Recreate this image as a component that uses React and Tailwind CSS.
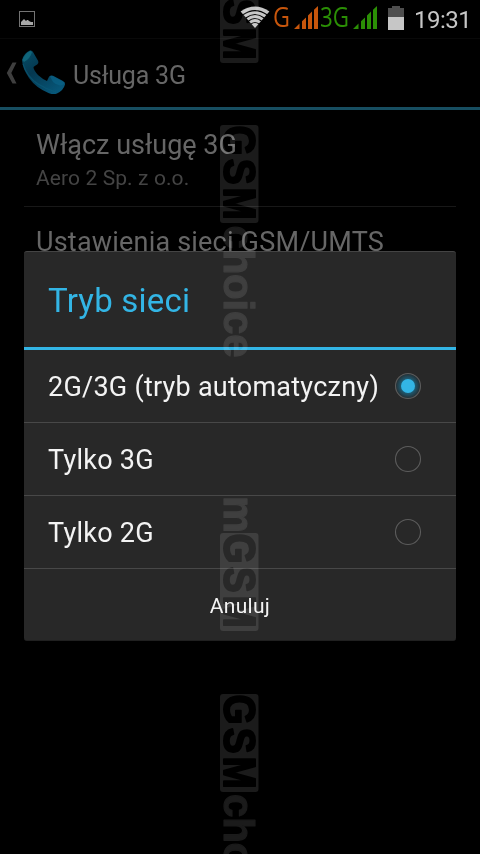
import React, { useState } from "react";
import clsx from "clsx";

const networkModes = [
  { id: "auto", label: "2G/3G (tryb automatyczny)" },
  { id: "3g", label: "Tylko 3G" },
  { id: "2g", label: "Tylko 2G" },
];

// y = top edge of each visible piece
const platePositions = [-35, 125, 533, 694];

function PictureIcon() {
  return (
    <svg width="16" height="16" viewBox="0 0 16 16">
      <rect x="0.5" y="0.5" width="15" height="15" fill="#000" stroke="#737373" />
      <path d="M2 14v-3l2-2 1-1 2 2 1-1h1l1 1 2 1h2v3z" fill="#a8a8a8" />
    </svg>
  );
}

function WifiIcon() {
  return (
    <svg width="30" height="22" viewBox="0 0 30 22">
      <path d="M0.6 5.5Q15 -4.6 29.4 5.5L15 22z" fill="#c6c6c6" />
      <g fill="none" stroke="#000" strokeWidth="1.1">
        <path d="M3 8.8Q15 0.4 27 8.8" />
        <path d="M5.8 12Q15 5 24.2 12" />
        <path d="M8.5 15Q15 10 21.5 15" />
        <path d="M11 18Q15 15 19 18" />
      </g>
    </svg>
  );
}

function SignalIcon({ color }) {
  return (
    <svg width="24" height="23" viewBox="0 0 24 23" fill={color}>
      <path d="M0 23L5.5 17.5V23zM8 15.3L12 11.5V23H8zM14 9.6L18 5.6V23H14zM20 3.7L24 0V23H20z" />
    </svg>
  );
}

function NetworkType({ label, width, color }) {
  return (
    <svg className="overflow-visible" width={width} height="36" fill={color}>
      <text x="0" y="27" fontFamily="Open Sans" fontSize="26.5" textLength={width} lengthAdjust="spacingAndGlyphs">
        {label}
      </text>
    </svg>
  );
}

function BatteryIcon() {
  return (
    <svg width="16" height="24" viewBox="0 0 16 24">
      <path d="M0 2h4V0h8v2h4v9H0z" fill="#4e4e4e" />
      <path d="M0 11h16v13H0z" fill="#c6c6c6" />
    </svg>
  );
}

function PhoneIcon() {
  return (
    <svg width="45" height="45" viewBox="0 0 45 45">
      <defs>
        <linearGradient id="phoneBody" x1="0" y1="0" x2="0.7" y2="1">
          <stop offset="0" stopColor="#064f69" />
          <stop offset="0.45" stopColor="#053850" />
          <stop offset="1" stopColor="#075678" />
        </linearGradient>
      </defs>
      <path
        d="M1 10Q3 3 9 0.5Q11 0 12 2L17.2 11Q18 13 16.2 14.5Q14 15.8 12.5 17Q12.5 20 17 25Q22 29.5 26 31L28 26.8Q29.5 24.8 32 25.8L42 31Q44.6 32.5 44 34.6Q42.5 40.5 36 43.6Q32.5 44.8 28 43.2Q15 38 8 28Q1.5 18.5 1 10z"
        fill="url(#phoneBody)"
      />
      <path d="M1.5 10Q4 3 9.5 0.8L11 2.2Q9 9 3 12z" fill="#10657a" />
      <path d="M29 26.5Q30.5 25 33 26.5L43.5 32.5Q43 35 39 35.5Q35 35 32 32z" fill="#0a6388" opacity="0.7" />
      <path d="M2 14Q6 27 17 34Q25 39 35 42" fill="none" stroke="#0b5b78" strokeWidth="1.2" opacity="0.6" />
    </svg>
  );
}

function Radio({ checked }) {
  return (
    <svg width="28" height="28" viewBox="0 0 28 28">
      <defs>
        <radialGradient id="radioGlow">
          <stop offset="0.55" stopColor="#1e5c74" />
          <stop offset="0.95" stopColor="#253238" />
        </radialGradient>
      </defs>
      <circle cx="14" cy="14" r="12.5" fill={checked ? "url(#radioGlow)" : "none"} stroke="#5c5c5c" strokeWidth="1.1" />
      {checked && <circle cx="14" cy="14" r="7" fill="#33b5e5" />}
    </svg>
  );
}

function Watermark() {
  return (
    <svg className="pointer-events-none absolute inset-0 mix-blend-screen" width="480" height="854">
      <g fontFamily="Liberation Sans" fontWeight="700" strokeLinejoin="round" strokeWidth="2">
        {platePositions.map((y) => (
          <g key={y} transform={`translate(220 ${y}) rotate(90)`}>
            <rect x="0" y="-38.5" width="98" height="38.5" rx="3" fill="#1b1b1b" />
            <text transform="translate(0.5 -4) scale(0.86 1)" fontSize="45" letterSpacing="3.6" fill="#000" stroke="#000">
              GSM
            </text>
          </g>
        ))}
        <g fill="#1b1b1b" stroke="#1b1b1b" strokeWidth="1.2" fontSize="42">
          <text transform="translate(224 225.5) rotate(90)" textLength="132" lengthAdjust="spacing">
            choice
          </text>
          <text transform="translate(224 794) rotate(90)" textLength="132" lengthAdjust="spacing">
            choice
          </text>
          <text transform="translate(224 496) rotate(90)" textLength="37" lengthAdjust="spacingAndGlyphs">
            m
          </text>
        </g>
      </g>
    </svg>
  );
}

export default function App() {
  const [mode, setMode] = useState("auto");

  return (
    <div className="relative isolate h-[854px] w-[480px] overflow-hidden bg-black font-['Roboto',sans-serif]">
      {/* status bar */}
      <header className="flex h-[38px] items-start pl-[19px]">
        <div className="pt-[11px]">
          <PictureIcon />
        </div>
        <div className="ml-[205px] pt-[6px]">
          <WifiIcon />
        </div>
        <div className="ml-[3px]">
          <NetworkType label="G" width={17} color="#c8560c" />
        </div>
        <div className="ml-[4px] pt-[6px]">
          <SignalIcon color="#c8560c" />
        </div>
        <div className="ml-[2px]">
          <NetworkType label="3G" width={29} color="#2b8f05" />
        </div>
        <div className="ml-[4px] pt-[6px]">
          <SignalIcon color="#2b8f05" />
        </div>
        <div className="ml-[11px] pt-[6px]">
          <BatteryIcon />
        </div>
        <span className="ml-[10px] pt-[4px] text-[24px] leading-[32px] tracking-[-0.5px] text-[#c6c6c6]">19:31</span>
      </header>

      {/* action bar */}
      <div className="flex h-[72px] items-center border-t border-b-[3px] border-t-[#090909] border-b-[#174e61] pl-[6px]">
        <svg width="12" height="22" viewBox="0 0 12 22">
          <path d="M6.5 0.5H10.5L5.3 11L10.5 21.5H6.5L0.8 11z" fill="#3f3f3f" />
        </svg>
        <div className="ml-[3px] -mt-px">
          <PhoneIcon />
        </div>
        <h1 className="ml-[7px] pt-[5px] text-[25px] tracking-[-0.2px] text-[#666666]">Usługa 3G</h1>
      </div>

      {/* settings list behind the dialog */}
      <main className="mx-6">
        <div className="h-[97px] border-b border-[#181818] px-3 pt-[18px]">
          <p className="text-[27px] leading-[34px] text-[#666666]">Włącz usługę 3G</p>
          <p className="text-[21px] leading-[32px] tracking-[0.1px] text-[#444444]">Aero 2 Sp. z o.o.</p>
        </div>
        <div className="px-3 pt-[18px]">
          <p className="text-[27px] leading-[34px] tracking-[0.2px] text-[#666666]">Ustawienia sieci GSM/UMTS</p>
        </div>
      </main>

      {/* dialog */}
      <div className="absolute top-[251px] left-6 h-[390px] w-[432px] overflow-hidden rounded-[3px] border-t border-b border-t-[#444444] border-b-[#202020] bg-[#282828]">
        <div className="flex h-[98px] items-center border-b-[3px] border-[#33b5e5] px-6">
          <h2 className="pt-[2px] text-[33px] tracking-[0.2px] text-[#33b5e5]">Tryb sieci</h2>
        </div>
        {networkModes.map((item) => (
          <button
            key={item.id}
            type="button"
            onClick={() => setMode(item.id)}
            className={clsx(
              "flex h-[73px] w-full items-center justify-between border-b border-[#484848]",
              "pr-[34px] pl-6 text-left text-[27px] tracking-[0.24px] text-[#f3f3f3]"
            )}
          >
            <span className="pt-[2px] whitespace-nowrap">{item.label}</span>
            <Radio checked={mode === item.id} />
          </button>
        ))}
        <button
          type="button"
          className="flex h-[72px] w-full items-center justify-center pt-[3px] text-[21px] tracking-[0.3px] text-[#f3f3f3]"
        >
          Anuluj
        </button>
      </div>

      <Watermark />
    </div>
  );
}
